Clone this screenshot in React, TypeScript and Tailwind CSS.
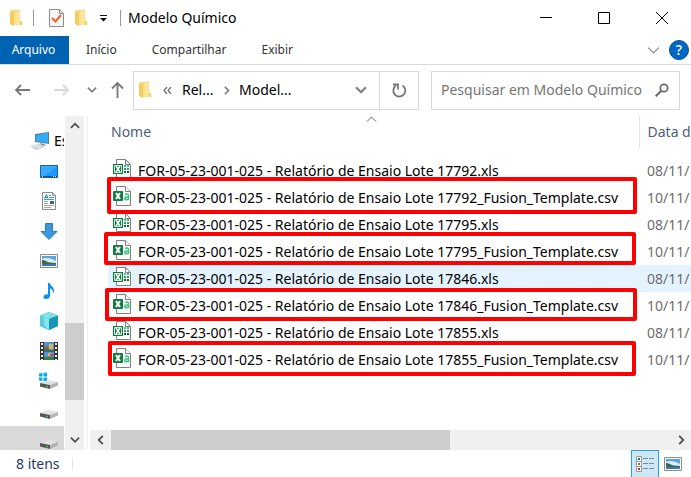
import type { ReactNode } from 'react';

function Svg({ w, h, box, children, className = '' }: { w: number; h: number; box?: string; children: ReactNode; className?: string }) {
  return (
    <svg width={w} height={h} viewBox={box ?? `0 0 ${w} ${h}`} fill="none" aria-hidden="true" className={`shrink-0 ${className}`}>
      {children}
    </svg>
  );
}

function Chevron({ dir, color = '#555', size = 10, stroke = 2 }: { dir: 'up' | 'down' | 'left' | 'right'; color?: string; size?: number; stroke?: number }) {
  const paths = { up: 'M1 7.5 5.5 3 10 7.5', down: 'M1 3 5.5 7.5 10 3', left: 'M7.5 1 3 5.5 7.5 10', right: 'M3.5 1 8 5.5 3.5 10' };
  return (
    <Svg w={size} h={size} box="0 0 11 11">
      <path d={paths[dir]} stroke={color} strokeWidth={stroke} />
    </Svg>
  );
}

function Folder() {
  return (
    <Svg w={13} h={17}>
      <path d="M1 0h9v11l2 1v3H1z" fill="#f7d774" />
      <path d="M5 1h5v14H4z" fill="#ffe497" />
      <path d="M0 1l4 2v13l-4-2z" fill="#f3cb5f" />
      <path d="M10 11h2v4h-2z" fill="#f3cd62" />
    </Svg>
  );
}

function XlsIcon() {
  return (
    <Svg w={18} h={19}>
      <path d="M3.500.5h9l5 5v13h-14z" fill="#fff" />
      <path d="M3.500 5V.5h9l5 5v13h-14V15" stroke="#808080" />
      <path d="M12.500.5v5h5" stroke="#808080" />
      <path d="M0 5h10v10H0z" fill="#107c41" />
      <path d="M1.500 6.500h7v7h-7z" stroke="#cfe8d9" />
      <path d="m3 7 4 6m0-6-4 6" stroke="#fff" strokeWidth="1.500" />
      <path d="M11 6h2v2h-2zM14 6h2v2h-2z" fill="#33c481" />
      <path d="M11 9h2v2h-2zM14 9h2v2h-2z" fill="#21a366" />
      <path d="M11 12h2v2h-2zM14 12h2v2h-2z" fill="#185c37" />
    </Svg>
  );
}

function CsvIcon() {
  return (
    <Svg w={18} h={20}>
      <path d="M3.500.5h9l5 5v14h-14z" fill="#fafafa" stroke="#808080" />
      <path d="M12.500.5v5h5" fill="#fff" stroke="#808080" />
      <rect y="5" width="10" height="10" rx="1" fill="#107c41" />
      <path d="m3 7 4 6m0-6-4 6" stroke="#fff" strokeWidth="2" />
      <path d="M12 8.500c1-.7 3.500-.9 3.500 1V14M15.500 10.800c-2 0-3.700.2-3.700 1.700 0 2 3 1.700 3.700-.2" stroke="#33c481" strokeWidth="1.500" />
    </Svg>
  );
}

function Picture() {
  return (
    <Svg w={18} h={14}>
      <path d="M.5.5h17v13H.5z" fill="#fff" stroke="#8c8c8c" />
      <path d="M2 2h14v10H2z" fill="#5aa3e0" />
      <path d="M2 5c4-2 9-1 14 2v2H2z" fill="#d9edf9" />
      <path d="M2 6c3 0 5 2 8 2.500L16 9v1H2z" fill="#3c6b52" />
      <path d="M2 10h14v2H2z" fill="#3679b5" />
    </Svg>
  );
}

function Drive({ windows = false }: { windows?: boolean }) {
  return (
    <Svg w={20} h={20} className="-ml-px">
      {windows && <path d="M0 2.500 3.500 2v3.500H0zM4.500 2 8 1.500v4H4.500zM0 6.500h3.500V10L0 9.500zM4.500 6.500H8v4l-3.500-.5z" fill="#00adef" />}
      <path d="M1 12 9 9l10 2-8 3z" fill="#e2e2e2" />
      <path d="m1 12 10 2v4L1 15.500z" fill="#555" />
      <path d="m11 14 8-3v3.500L11 18z" fill="#b4b4b4" />
      <path d="M7 14.800h2v1.500H7z" fill="#3cc94a" />
    </Svg>
  );
}

const navItems: { name: string; icon: ReactNode }[] = [
  {
    name: 'Área de Trabalho',
    icon: (
      <Svg w={18} h={13}>
        <path d="M.5.5h17v12H.5z" fill="#1a9bfc" stroke="#1565a8" />
        <path d="M1 1h16L5 11H1z" fill="#39aaff" />
        <path d="M1 11h16v1H1z" fill="#0b4f8a" />
        <path d="M2 11h1v1H2zM13 11h1v1h-1zM15 11h1v1h-1z" fill="#fff" />
      </Svg>
    ),
  },
  {
    name: 'Documentos',
    icon: (
      <Svg w={16} h={18} className="ml-0.5">
        <path d="M.5.5h10l3 3v14H.5z" fill="#fff" stroke="#8a8a8a" />
        <path d="M10.500.5v3h3" stroke="#8a8a8a" />
        <path d="m2.500 6.500 2-4 1.500 4M3 5.500h3" stroke="#1c7fc7" />
        <path d="M7 3.500h2M7 5.500h5M2 7.500h10" stroke="#3d9bdc" />
        <path d="M2 9.500h4M2 11.500h4M2 13.500h10M2 15.500h7" stroke="#a3a3a3" />
        <path d="M8 9h4v3H8z" fill="#35658b" />
      </Svg>
    ),
  },
  {
    name: 'Downloads',
    icon: (
      <Svg w={18} h={18}>
        <path d="M5.500 1.500h7v8h4.500l-8 8-8-8h4.500z" fill="#3a96dd" stroke="#2b7ebf" />
      </Svg>
    ),
  },
  { name: 'Imagens', icon: <Picture /> },
  {
    name: 'Músicas',
    icon: (
      <Svg w={18} h={18}>
        <path d="M8 1h2c0 3 5 4 4 9l-1 1c0-3-1-4-3-4.500V14c0 2-2 3-4 3s-3-1-2.500-2.500S6 12 8 12.500z" fill="#0c91f0" />
      </Svg>
    ),
  },
  {
    name: 'Objetos 3D',
    icon: (
      <Svg w={18} h={18}>
        <path d="m9 0 9 3.500V14l-9 4-9-4V3.500z" fill="#35bcd0" />
        <path d="m9 0 9 3.500L9 7 0 3.500z" fill="#82e0e8" />
        <path d="M9 7v11l-9-4V3.500z" fill="#5bcbdc" />
        <path d="M9 7 4 5v8l5 5z" fill="#8ce3eb" />
        <path d="m9 7 9-3.500V14l-9 4z" fill="#1797b4" />
      </Svg>
    ),
  },
  {
    name: 'Vídeos',
    icon: (
      <Svg w={18} h={18}>
        <path d="M0 0h18v18H0z" fill="#333" />
        <path d="M4 0h10v8.500H4zM4 9.500h10V18H4z" fill="#4f93d8" />
        <path d="M9 2h4v5H9zM8 11h3v3H8z" fill="#e8b63b" />
        <path d="M4 6h5v2.500H4zM4 15h10v3H4z" fill="#3f7c3f" />
        <path d="M5 4h3v2H5zM10 12h3v2h-3z" fill="#c7435a" />
        <path d="M2 1v17M16 1v17" stroke="#eee" strokeWidth="2" strokeDasharray="2 2" />
      </Svg>
    ),
  },
  { name: 'Disco do Windows', icon: <Drive windows /> },
  { name: 'Disco 2', icon: <Drive /> },
  { name: 'Disco 3', icon: <Drive /> },
];

const lots = ['17792', '17795', '17846', '17855'];
const files = lots.flatMap((lot) => [
  { name: `FOR-05-23-001-025 - Relatório de Ensaio Lote ${lot}.xls`, date: '08/11/', csv: false, active: lot === '17846' },
  { name: `FOR-05-23-001-025 - Relatório de Ensaio Lote ${lot}_Fusion_Template.csv`, date: '10/11/', csv: true, active: false },
]);

const marks = [
  'left-[17px] top-[61px] w-[530px] h-[37px]',
  'left-[14px] top-[116px] w-[532px] h-[33px]',
  'left-[15px] top-[172px] w-[532px] h-[33px]',
  'left-[18px] top-[225px] w-[528px] h-[35px]',
];

function TitleBar() {
  return (
    <header className="flex h-9 shrink-0 items-center">
      <div className="flex flex-1 items-center pl-[10px]">
        <Folder />
        <span className="ml-[10px] h-4 w-px bg-[#999]" />
        <button aria-label="Propriedades" className="ml-[15px]">
          <Svg w={15} h={18}>
            <path d="M.5.5h10l4 4v13H.5z" fill="#f5f5f7" stroke="#8b8b8b" />
            <path d="M10.500.5v4h4" stroke="#8b8b8b" />
            <path d="m3 9 3.500 3.500L12 6" stroke="#f0642d" strokeWidth="2" />
          </Svg>
        </button>
        <button aria-label="Nova pasta" className="ml-[11px]"><Folder /></button>
        <button aria-label="Personalizar" className="ml-3">
          <Svg w={8} h={8}>
            <path d="M0 1.500h7" stroke="#111" />
            <path d="M0 4h7L3.500 7.500z" fill="#111" />
          </Svg>
        </button>
        <span className="ml-3 h-4 w-px bg-[#999]" />
        <h1 className="ml-[7px] text-sm">Modelo Químico</h1>
      </div>
      <button aria-label="Minimizar" className="flex h-8 w-[58px] items-center justify-center"><Svg w={12} h={12}><path d="M0 5.500h12" stroke="#000" /></Svg></button>
      <button aria-label="Maximizar" className="flex h-8 w-[58px] items-center justify-center"><Svg w={12} h={12}><path d="M.5.5h11v11H.5z" stroke="#000" /></Svg></button>
      <button aria-label="Fechar" className="flex h-8 w-[58px] items-center justify-center"><Svg w={12} h={12}><path d="m0 0 12 12M12 0 0 12" stroke="#000" /></Svg></button>
    </header>
  );
}

function Ribbon() {
  return (
    <nav className="flex h-[29px] shrink-0 items-center border-b border-[#d9dadb] text-xs text-[#333]">
      <button className="h-full w-[69px] bg-[#0063b1] pr-[2px] text-white">Arquivo</button>
      <button className="ml-[17px]">Início</button>
      <button className="ml-[35px]">Compartilhar</button>
      <button className="ml-[35px]">Exibir</button>
      <div className="flex flex-1 items-center justify-end gap-[9px] pr-[2px]">
        <button aria-label="Expandir faixa"><Chevron dir="down" size={13} stroke={1} color="#888" /></button>
        <button aria-label="Ajuda" className="flex size-5 items-center justify-center rounded-full border border-[#004f91] bg-[#0067c5] text-sm font-medium text-white">?</button>
      </div>
    </nav>
  );
}

function AddressRow() {
  return (
    <div className="flex h-[51px] shrink-0 items-center pb-px pl-[15px] pr-[11px]">
      <button aria-label="Voltar"><Svg w={16} h={12}><path d="M15 6H1M6 1 1 6l5 5" stroke="#777" strokeWidth="1.800" /></Svg></button>
      <button aria-label="Avançar" className="ml-[23px]"><Svg w={16} h={12}><path d="M0 6h14M9 1l5 5-5 5" stroke="#d8d8d8" strokeWidth="1.800" /></Svg></button>
      <button aria-label="Locais recentes" className="ml-[17px]"><Chevron dir="down" color="#808080" /></button>
      <button aria-label="Acima" className="ml-[14px]"><Svg w={13} h={16}><path d="M6.500 16V1M1 6.500 6.500 1 12 6.500" stroke="#777" strokeWidth="1.800" /></Svg></button>
      <div className="ml-[9px] flex h-[39px] min-w-0 flex-1 items-center border border-[#d9d9d9] pl-[5px] text-sm">
        <Folder />
        <button aria-label="Pastas anteriores" className="ml-[11px] flex"><Svg w={10} h={7}><path d="M4 0 1 3.500 4 7M8 0 5 3.500 8 7" stroke="#666" strokeWidth="1.200" /></Svg></button>
        <button className="ml-[9px] w-[31px] text-left">Rel...</button>
        <span className="ml-[9px]"><Chevron dir="right" size={9} color="#808080" /></span>
        <button className="ml-2">Model...</button>
        <div className="flex h-full flex-1 items-center justify-end">
          <button aria-label="Locais" className="mr-3"><Chevron dir="down" size={12} color="#808080" /></button>
          <button aria-label="Atualizar" className="flex h-full w-[39px] items-center justify-center border-l border-[#d9d9d9]">
            <Svg w={15} h={15}>
              <path d="M10.500 2.500A6 6 0 1 1 4 2.600" stroke="#777" strokeWidth="1.800" />
              <path d="M1 1.500h5v5" stroke="#777" strokeWidth="1.800" />
            </Svg>
          </button>
        </div>
      </div>
      <label className="ml-3 flex h-[39px] w-[249px] items-center border border-[#d9d9d9] pl-[9px] pr-[10px]">
        <input type="text" aria-label="Pesquisar" placeholder="Pesquisar em Modelo Químico" className="min-w-0 flex-1 text-sm outline-none placeholder:text-[#767676]" />
        <Svg w={14} h={14}>
          <circle cx="9" cy="5" r="3.700" stroke="#666" strokeWidth="1.700" />
          <path d="M6.300 7.700.7 13.300" stroke="#666" strokeWidth="2" />
        </Svg>
      </label>
    </div>
  );
}

function NavPane() {
  return (
    <aside className="flex w-[84px] shrink-0">
      <div className="w-[65px] overflow-hidden pt-[10px]">
        <ul>
          <li className="flex h-[30px] w-16 items-center gap-[5px] overflow-hidden pl-[30px] text-sm">
            <Svg w={19} h={18}>
              <path d="M5 2 19 0v12L5 10z" fill="#4f7f9f" />
              <path d="m6 3 12-2v10L6 9z" fill="#35aaf5" />
              <path d="m10 11 4 1 2 2-5-1z" fill="#888" />
              <path d="m0 14 9-2 6 3-9 3z" fill="#c9cdd1" />
              <path d="m2 14 8 2M5 13l7 2" stroke="#eee" />
            </Svg>
            <span>Es</span>
          </li>
          {navItems.map((item, i) => (
            <li key={item.name} className={i === navItems.length - 1 ? 'h-[30px] w-16 bg-[#d9d9d9]' : 'h-[30px] w-16'}>
              <button aria-label={item.name} className="flex h-full w-full items-center pl-10">{item.icon}</button>
            </li>
          ))}
        </ul>
      </div>
      <div className="flex w-[19px] flex-col items-center bg-[#f0f0f0]">
        <div className="flex h-5 items-center"><Chevron dir="up" color="#505050" /></div>
        <div className="min-h-0 flex-[187]" />
        <div className="h-[77px] w-full bg-[#cdcdcd]" />
        <div className="min-h-0 flex-[30]" />
        <div className="flex h-5 items-center"><Chevron dir="down" color="#505050" /></div>
      </div>
    </aside>
  );
}

function FileList() {
  return (
    <main className="ml-[3px] flex min-w-0 flex-1 flex-col border-l border-[#f0f0f0] pl-[2px]">
      <div className="relative min-h-0 flex-1 overflow-hidden pl-[18px]">
        <table className="w-full table-fixed border-collapse whitespace-nowrap text-left text-sm">
          <colgroup>
            <col className="w-[531px]" />
            <col />
          </colgroup>
          <thead>
            <tr className="h-8 text-[#4c607a]">
              <th className="relative border-r border-[#e5e5e5] pl-[3px] font-normal">
                Nome
                <span className="absolute left-[258px] top-[-2px]"><Chevron dir="up" size={11} stroke={1} color="#666" /></span>
              </th>
              <th className="overflow-hidden pl-2 font-normal">Data d</th>
            </tr>
            <tr aria-hidden="true" className="h-[9px]" />
          </thead>
          <tbody>
            {files.map((f) => (
              <tr key={f.name} className={f.active ? 'h-[27px] bg-[#e5f3ff]' : 'h-[27px]'}>
                <td className="p-0">
                  <div className="flex h-[27px] items-center gap-[7px] pl-[5px] text-black">
                    <span className="-mt-1">{f.csv ? <CsvIcon /> : <XlsIcon />}</span>
                    {f.name}
                  </div>
                </td>
                <td className="overflow-hidden p-0 pl-2 text-[#6d6d6d]">{f.date}</td>
              </tr>
            ))}
          </tbody>
        </table>
        {marks.map((m) => (
          <div key={m} className={`pointer-events-none absolute rounded-xs border-4 border-[#ff0000] ${m}`} />
        ))}
      </div>
      <div className="flex h-5 shrink-0 items-center bg-[#f0f0f0]">
        <div className="flex w-[21px] justify-center"><Chevron dir="left" color="#505050" /></div>
        <div className="h-full flex-[339] bg-[#cdcdcd]" />
        <div className="flex-[221]" />
        <div className="flex w-5 justify-center"><Chevron dir="right" color="#505050" /></div>
      </div>
    </main>
  );
}

function StatusBar() {
  return (
    <footer className="flex h-[27px] shrink-0 items-center pl-4 text-sm text-[#1f3764]">
      <span>8 itens</span>
      <span className="ml-3 h-3 w-px bg-[#e5e5e5]" />
      <div className="flex h-full flex-1 justify-end pr-[9px]">
        <button aria-label="Detalhes" className="flex h-full w-7 items-center justify-center border border-b-0 border-[#26a0da] bg-[#cce8f6]">
          <Svg w={18} h={17}>
            <path d="M.5.5h5v5h-5zM.5 5.500h5v5h-5zM.5 10.500h5v5h-5z" fill="#fff" stroke="#999" />
            <path d="M2 2h2v2H2z" fill="#2c6aa8" />
            <path d="M2 7h2v2H2z" fill="#857429" />
            <path d="M2 12h2v2H2z" fill="#d22" />
            <path d="M7 2.500h5M13 2.500h5M7 7.500h5M13 7.500h5M7 12.500h5M13 12.500h5" stroke="#7c8a92" />
          </Svg>
        </button>
        <button aria-label="Ícones grandes" className="ml-[5px] flex items-center"><Picture /></button>
      </div>
    </footer>
  );
}

export default function App() {
  return (
    <div className="flex h-screen flex-col overflow-hidden bg-white font-['Noto_Sans','Open_Sans',sans-serif] text-black">
      <TitleBar />
      <Ribbon />
      <AddressRow />
      <div className="flex min-h-0 flex-1">
        <NavPane />
        <FileList />
      </div>
      <StatusBar />
    </div>
  );
}
